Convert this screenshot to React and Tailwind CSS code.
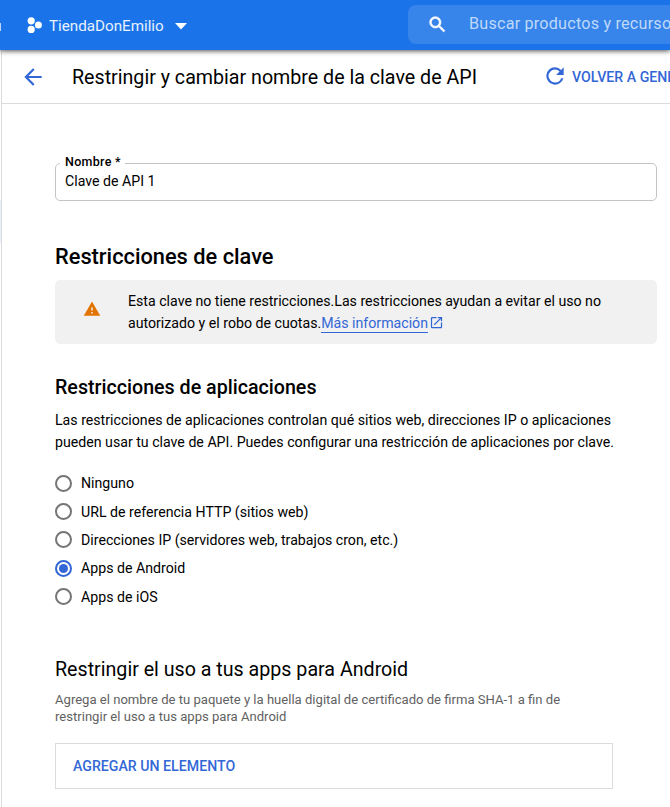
import React from "react";

const options = [
  "Ninguno",
  "URL de referencia HTTP (sitios web)",
  "Direcciones IP (servidores web, trabajos cron, etc.)",
  "Apps de Android",
  "Apps de iOS",
];

function TopBar() {
  return (
    <header className="relative z-10 flex h-[50px] items-center bg-[#1a73e8] text-white shadow-[0_1px_5px_rgba(0,0,0,0.7)]">
      <div className="mt-[3px] h-2 w-px bg-white/70" />
      <svg className="ml-[26px] h-4 w-[15px]" viewBox="0 0 15 16" fill="currentColor">
        <circle cx="4.2" cy="3.8" r="3.6" />
        <circle cx="4.2" cy="12.4" r="3.6" />
        <circle cx="11.4" cy="8" r="3.5" />
      </svg>
      <span className="mt-px ml-[7px] w-[126px] text-[15.2px] leading-[20px] whitespace-nowrap text-white/90">TiendaDonEmilio</span>
      <svg className="mt-[2px] h-[7px] w-3" viewBox="0 0 12 7" fill="currentColor">
        <path d="M0 0h12L6 6.5z" />
      </svg>
      <div className="ml-auto flex h-[39px] w-[262px] shrink-0 items-center rounded-l-lg bg-[#3784ea] -mt-[2px]">
        <svg className="ml-[19px] h-[21px] w-[21px] shrink-0" viewBox="0 0 24 24" fill="currentColor" stroke="currentColor" strokeWidth="0.7">
          <path d="M15.5 14h-.79l-.28-.27A6.471 6.471 0 0 0 16 9.5 6.5 6.5 0 1 0 9.5 16c1.61 0 3.09-.59 4.23-1.57l.27.28v.79l5 4.99L20.49 19l-4.99-5zm-6 0C7.01 14 5 11.99 5 9.5S7.01 5 9.5 5 14 7.01 14 9.5 11.99 14 9.5 14z" />
        </svg>
        <span className="ml-[21px] text-[16.2px] tracking-[0.2px] whitespace-nowrap text-[#bfd9f9]">Buscar productos y recurso</span>
      </div>
    </header>
  );
}

function PageHeader() {
  return (
    <div className="flex h-[54px] items-center border-b border-[#dcdcdc] pl-[18px]">
      <svg className="h-[26px] w-[26px] shrink-0 text-[#3367d6]" viewBox="0 0 24 24" fill="currentColor">
        <path d="M20 11H7.83l5.59-5.59L12 4l-8 8 8 8 1.41-1.41L7.83 13H20v-2z" />
      </svg>
      <h1 className="mt-[3px] ml-[26px] w-[470px] shrink-0 text-[19.65px] leading-[30px] whitespace-nowrap">Restringir y cambiar nombre de la clave de API</h1>
      <svg className="h-[26px] w-[26px] shrink-0 text-[#3367d6] -mt-px" viewBox="0 0 24 24" fill="currentColor">
        <path d="M17.65 6.35A7.958 7.958 0 0 0 12 4a8 8 0 1 0 7.73 10h-2.08A5.99 5.99 0 0 1 12 18a6 6 0 1 1 0-12c1.66 0 3.14.69 4.22 1.78L13 11h7V4l-2.35 2.35z" />
      </svg>
      <span className="ml-[4px] text-[14.17px] leading-[20px] font-medium whitespace-nowrap text-[#3367d6]">VOLVER A GENE</span>
    </div>
  );
}

function Radio({ label, checked }) {
  return (
    <label className="flex h-[28.35px] items-center">
      <span className={`flex h-[17px] w-[17px] items-center justify-center rounded-full border-2 ${checked ? "border-[#3367d6]" : "border-[#757575]"}`}>
        {checked && <span className="h-[9px] w-[9px] rounded-full bg-[#3367d6]" />}
      </span>
      <span className="ml-[9px] pt-[0.3px] text-[14.17px] leading-[20px]">{label}</span>
    </label>
  );
}

export default function App() {
  return (
    <div className="h-[807px] w-[670px] overflow-hidden bg-white font-[Roboto,sans-serif] text-black">
      <TopBar />
      <div className="flex">
        <aside className="h-[757px] w-px shrink-0 pt-[150px]">
          <div className="h-[43px] bg-[#e8f0fe]" />
        </aside>
        <main className="h-[757px] w-[669px] overflow-hidden border-l border-[#dcdcdc]">
          <PageHeader />
          <div className="pt-[59px] pr-[13px] pl-[53px]">
            <div className="h-[38px] rounded-[5px] border border-[#c4c4c4] pl-[4px]">
              <div className="-mt-[10px] w-[65px] bg-white pl-[5px] text-[12.5px] leading-[16px] font-medium tracking-[0.3px] whitespace-nowrap">Nombre *</div>
              <div className="pl-[5px] text-[14.17px] leading-[22px]">Clave de API 1</div>
            </div>

            <h2 className="mt-[42px] text-[21.8px] leading-[28px] font-medium whitespace-nowrap">Restricciones de clave</h2>
            <div className="mt-[9px] flex h-[64px] items-center rounded-[5px] bg-[#f1f1f1] pl-[28px]">
              <svg className="mt-[-6px] h-[18px] w-[18px] shrink-0 text-[#e37400]" viewBox="0 0 24 24" fill="currentColor">
                <path d="M1 21h22L12 2 1 21zm12-3h-2v-2h2v2zm0-4h-2v-4h2v4z" />
              </svg>
              <p className="ml-[27px] text-[14.17px] leading-[22px] whitespace-nowrap">
                Esta clave no tiene restricciones.Las restricciones ayudan a evitar el uso no
                <br />
                autorizado y el robo de cuotas.
                <a className="inline-block h-[21px] border-b border-[#3367d6] text-[#3367d6]">Más información</a>
                <svg className="ml-px inline-block h-[15px] w-[15px] align-[-2px] text-[#3367d6]" viewBox="0 0 24 24" fill="currentColor">
                  <path d="M19 19H5V5h7V3H5a2 2 0 0 0-2 2v14a2 2 0 0 0 2 2h14c1.1 0 2-.9 2-2v-7h-2v7zM14 3v2h3.59l-9.83 9.83 1.41 1.41L19 6.41V10h2V3h-7z" />
                </svg>
              </p>
            </div>

            <h3 className="mt-[31px] text-[19.65px] leading-[26px] font-medium whitespace-nowrap">Restricciones de aplicaciones</h3>
            <p className="mt-[8px] text-[14.17px] leading-[22px] whitespace-nowrap">
              Las restricciones de aplicaciones controlan qué sitios web, direcciones IP o aplicaciones
              <br />
              pueden usar tu clave de API. Puedes configurar una restricción de aplicaciones por clave.
            </p>

            <div className="mt-[16px] flex flex-col">
              {options.map((o) => (
                <Radio key={o} label={o} checked={o === "Apps de Android"} />
              ))}
            </div>

            <h3 className="mt-[46px] text-[19.65px] leading-[26px] whitespace-nowrap">Restringir el uso a tus apps para Android</h3>
            <p className="mt-[8px] text-[13.08px] leading-[17px] whitespace-nowrap text-[#616161]">
              Agrega el nombre de tu paquete y la huella digital de certificado de firma SHA-1 a fin de
              <br />
              restringir el uso a tus apps para Android
            </p>
            <div className="mt-[18px] flex h-[46px] w-[558px] items-center border border-[#dcdcdc] pl-[17px]">
              <button className="mt-px text-[14.17px] font-medium text-[#3367d6]">AGREGAR UN ELEMENTO</button>
            </div>
          </div>
        </main>
      </div>
    </div>
  );
}
